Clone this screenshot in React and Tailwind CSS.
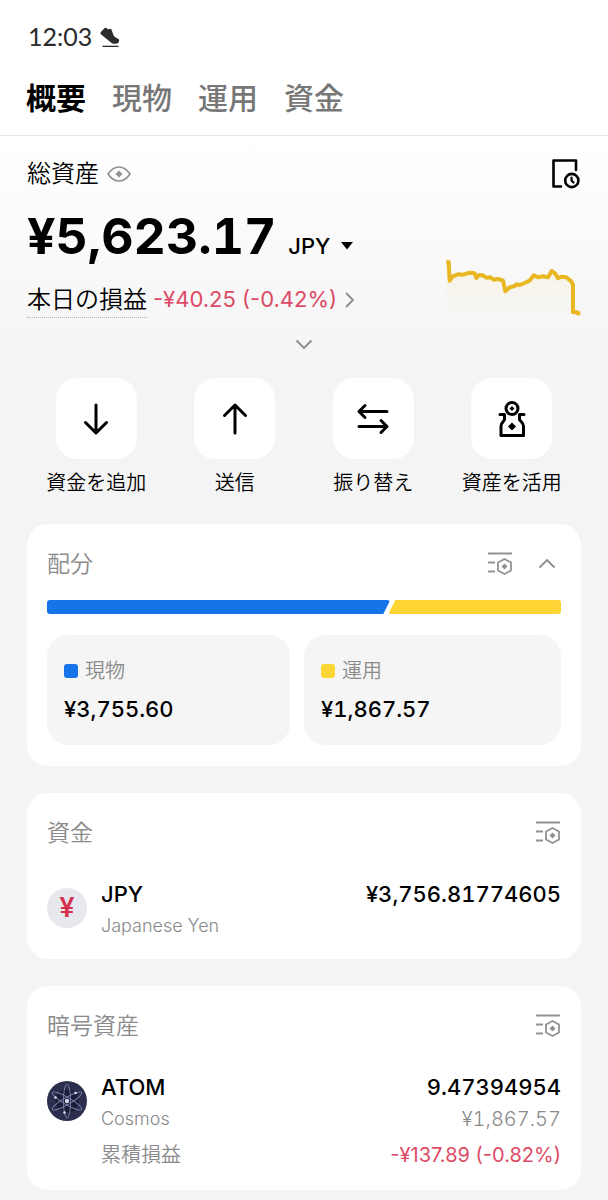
import React from "react";

const tabs = ["概要", "現物", "運用", "資金"];

const allocation = [
  { label: "現物", value: 3755.6, color: "bg-[#1773ea]" },
  { label: "運用", value: 1867.57, color: "bg-[#fcd535]" },
];

const total = allocation.reduce((sum, item) => sum + item.value, 0);

const formatYen = (value) =>
  "¥" + value.toLocaleString("en-US", { minimumFractionDigits: 2 });

const ShoeIcon = () => (
  <svg viewBox="0 0 60 64" className="w-5 h-[21px]" fill="#2b2b2b" aria-hidden="true">
    <path d="M1 17 13 4Q17 0 20 4Q23 9 28 6Q33 4 35 9L41 26Q44 32 53 35Q58 36 58 42Q57 50 49 51L42 51Q37 51 33 47L3 23Q0 20 1 17Z" />
    <rect x="7" y="57" width="49" height="4" />
  </svg>
);

const EyeIcon = () => (
  <svg viewBox="0 0 24 16" className="w-6 h-4" fill="none" stroke="#929292" strokeWidth="1.7" aria-hidden="true">
    <path d="M1 8C4 3.500 7.800 1 12 1s8 2.500 11 7c-3 4.500-6.800 7-11 7S4 12.500 1 8Z" strokeLinejoin="round" />
    <path d="M12 4.500 15.500 8 12 11.500 8.500 8Z" fill="#929292" stroke="none" />
  </svg>
);

const HistoryIcon = () => (
  <svg viewBox="0 0 28 30" className="w-7 h-[30px]" fill="none" stroke="#000" strokeWidth="2.6" strokeLinecap="round" strokeLinejoin="round" aria-hidden="true">
    <path d="M9 27.500H1.500V1.500H24V11" />
    <circle cx="19.800" cy="21.500" r="6.600" />
    <path d="M19.500 18.500V21.500L21.500 23.500" strokeWidth="2.2" />
  </svg>
);

const Sparkline = () => {
  const line =
    "50,364 57,364 60,420 68,408 85,401 100,402 120,396 135,398 140,412 148,403 160,404 170,411 182,410 192,417 205,415 220,420 227,452 240,440 255,436 260,431 270,433 285,427 300,420 312,404 325,410 340,407 355,410 366,391 376,398 385,413 395,408 410,410 425,422 430,432 430,515 440,514 443,518 452,518";
  return (
    <svg viewBox="46 352 408 192" className="w-[136px] h-16" fill="none" role="img" aria-label="資産推移">
      <defs>
        <linearGradient id="spark" x1="0" y1="0" x2="0" y2="1">
          <stop offset="0" stopColor="#eab71e" stopOpacity="0.08" />
          <stop offset="1" stopColor="#eab71e" stopOpacity="0.02" />
        </linearGradient>
      </defs>
      <polygon points={`50,520 ${line} 452,520`} fill="url(#spark)" />
      <polyline points={line} stroke="#e9b722" strokeWidth="12" strokeLinejoin="round" />
    </svg>
  );
};

const Chevron = ({ d, className }) => (
  <svg viewBox="0 0 18 18" className={className} fill="none" stroke="#8c8c8c" strokeWidth="1.8" aria-hidden="true">
    <path d={d} />
  </svg>
);

const FilterIcon = () => (
  <svg viewBox="0 0 24 24" className="w-6 h-6" fill="none" stroke="#929292" strokeWidth="1.8" aria-hidden="true">
    <path d="M0 1.500H24M0 10.500H7M0 19.500H7" />
    <path d="M16.500 7 23 10.500V18.500L16.500 22 10 18.500V10.500Z" strokeLinejoin="round" />
    <path d="M16.500 11.500 19.500 14.500 16.500 17.500 13.500 14.500Z" fill="#929292" stroke="none" />
  </svg>
);

const ActionIcon = ({ children }) => (
  <svg viewBox="0 0 36 40" className="w-9 h-10" fill="none" stroke="#000" strokeWidth="3" strokeLinecap="round" strokeLinejoin="round" aria-hidden="true">
    {children}
  </svg>
);

const actions = [
  { label: "資金を追加", icon: <path d="M18 6V34M7.500 23.500 18 34 28.500 23.500" /> },
  { label: "送信", icon: <path d="M18 34V6M7.500 16.500 18 6 28.500 16.500" /> },
  {
    label: "振り替え",
    icon: <path d="M32 12.500H4M10 6.500 4 12.500 10 18.500M4 27.500H32M26 21.500 32 27.500 26 33.500" />,
  },
  {
    label: "資産を活用",
    icon: (
      <>
        <circle cx="18" cy="9.500" r="6" />
        <path d="M18 7 20.500 9.500 18 12 15.500 9.500ZM18 23.500 22 27.500 18 31.500 14 27.500Z" fill="#000" stroke="none" />
        <path d="M6 15.500H10.500V20.500C10 22.500 7 24 7 27V36.500H29.500V27C29.500 24 26.500 22.500 25.500 20.500V15.500H30" />
      </>
    ),
  },
];

const CosmosIcon = () => (
  <svg viewBox="0 0 40 40" className="w-10 h-10" fill="none" role="img" aria-label="Cosmos">
    <circle cx="20" cy="20" r="20" fill="#2c2e4d" />
    <circle cx="20" cy="20" r="11.500" fill="#1b1c36" />
    <g stroke="#7e83ae" strokeWidth="0.9">
      <ellipse cx="20" cy="20" rx="3.600" ry="17" />
      <ellipse cx="20" cy="20" rx="3.600" ry="17" transform="rotate(60 20 20)" />
      <ellipse cx="20" cy="20" rx="3.600" ry="17" transform="rotate(120 20 20)" />
    </g>
    <g fill="#d5d9ec">
      <circle cx="20" cy="20" r="2.200" />
      <circle cx="8.500" cy="16.500" r="1.300" />
      <circle cx="28.500" cy="12" r="1.300" />
      <circle cx="17.500" cy="31.500" r="1.300" />
    </g>
  </svg>
);

const YenIcon = () => (
  <div className="w-10 h-10 rounded-full bg-[#e6e8ed] flex items-center justify-center font-['Roboto',sans-serif] text-[28px] leading-10 font-medium text-[#d6304f]">
    ¥
  </div>
);

const Card = ({ title, controls, children }) => (
  <section className="bg-white rounded-[21px] px-5 pt-5">
    <div className="h-10 flex items-center justify-between">
      <h2 className="text-[23px] font-[350] text-[#8a8a8a]">{title}</h2>
      <div className="pr-[1px] flex items-center gap-[26px]">
        <button type="button" aria-label="表示設定">
          <FilterIcon />
        </button>
        {controls}
      </div>
    </div>
    {children}
  </section>
);

const AssetRow = ({ icon, symbol, name, amount, value, pnl }) => (
  <div className="mt-[25px] pb-[17px] flex gap-[14px]">
    <div className="pt-[10px]">{icon}</div>
    <div className="flex-1 text-xl font-[350] text-[#8a8a8a]">
      <div className="h-8 flex items-center justify-between text-[22px] font-medium text-black">
        <span>{symbol}</span>
        <span>{amount}</span>
      </div>
      <div className="h-8 flex items-center justify-between">
        <span className="text-lg">{name}</span>
        <span>{value}</span>
      </div>
      {pnl && (
        <div className="mt-[2px] h-9 flex items-center justify-between">
          <span>累積損益</span>
          <span className="font-normal proportional-nums text-[#dd4a66]">{pnl}</span>
        </div>
      )}
    </div>
  </div>
);

const App = () => {
  return (
    <div lang="ja" className="min-h-screen bg-[#f4f4f4] pb-[10px] text-black tabular-nums font-['Inter','Noto_Sans_CJK_JP',sans-serif]">
      <header className="bg-white border-b border-[#e6e6e6] px-[26px]">
        <div className="h-[74px] pl-[2px] flex items-center gap-2 font-['Lato',sans-serif] text-[25px] text-[#2b2b2b]">
          <span>12:03</span>
          <ShoeIcon />
        </div>
        <nav className="flex gap-[26px] pb-[13px] text-3xl leading-[48px]">
          {tabs.map((tab, i) => (
            <a key={tab} href="#" className={i === 0 ? "font-bold text-black" : "font-medium text-[#777777]"}>
              {tab}
            </a>
          ))}
        </nav>
      </header>

      <main className="px-[27px]">
        <section className="-mx-[27px] px-[27px] pt-[18px] bg-linear-to-b from-white to-[#f4f4f4]">
          <div className="flex justify-between">
            <div>
              <div className="h-10 flex items-center gap-2 text-2xl">
                <h1 className="font-[350]">総資産</h1>
                <button type="button" aria-label="残高を表示">
                  <EyeIcon />
                </button>
              </div>
              <div className="h-[84px] flex items-center gap-3">
                <span className="text-[50px] leading-[60px] font-bold">¥5,623.17</span>
                <div className="pt-5 flex items-center gap-[10px]">
                  <select aria-label="通貨" defaultValue="JPY" className="appearance-none bg-transparent text-[22px] font-medium">
                    <option>JPY</option>
                  </select>
                  <svg viewBox="0 0 12 8" className="w-3 h-2" aria-hidden="true">
                    <path d="M0 0H12L6 7.500Z" />
                  </svg>
                </div>
              </div>
              <div className="h-11 flex items-center gap-[6px] text-2xl">
                <span className="leading-[34px] font-[350] border-b border-dotted border-[#b0b0b0]">本日の損益</span>
                <a href="#" className="flex items-center gap-1 text-[22px] proportional-nums text-[#dd4a66]">
                  -¥40.25 (-0.42%)
                  <Chevron d="M5 2 12 9 5 16" className="w-[18px] h-[18px]" />
                </a>
              </div>
            </div>
            <div className="flex flex-col items-end justify-between">
              <button type="button" aria-label="履歴" className="h-10 pr-[1px]">
                <HistoryIcon />
              </button>
              <Sparkline />
            </div>
          </div>
          <div className="h-11 flex justify-center">
            <button type="button" aria-label="詳細">
              <Chevron d="M1.500 5.500 9 13 16.500 5.500" className="w-[18px] h-[18px]" />
            </button>
          </div>
        </section>

        <div className="pt-3 grid grid-cols-4">
          {actions.map((action) => (
            <button key={action.label} type="button" className="flex flex-col items-center gap-2 text-xl leading-8 font-[350]">
              <span className="w-[81px] h-[81px] rounded-[21px] bg-white flex items-center justify-center">
                <ActionIcon>{action.icon}</ActionIcon>
              </span>
              {action.label}
            </button>
          ))}
        </div>

        <div className="mt-[25px] flex flex-col gap-[27px]">
          <Card
            title="配分"
            controls={
              <button type="button" aria-label="折りたたむ" className="pr-1">
                <Chevron d="M1.500 12.500 9 5 16.500 12.500" className="w-[18px] h-[18px]" />
              </button>
            }
          >
            <div className="mt-4 h-[14px] flex">
              <div
                className="bg-[#1773ea] rounded-[3px] [clip-path:polygon(0_0,100%_0,calc(100%-7px)_100%,0_100%)]"
                style={{ width: `${(allocation[0].value / total) * 100}%` }}
              />
              <div className="-ml-[2px] flex-1 bg-[#fcd535] rounded-[3px] [clip-path:polygon(7px_0,100%_0,100%_100%,0_100%)]" />
            </div>
            <div className="mt-[21px] pb-[21px] grid grid-cols-[243fr_257fr] gap-[14px]">
              {allocation.map((item) => (
                <div key={item.label} className="bg-[#f5f5f5] rounded-[21px] px-[17px] pt-5 pb-[14px]">
                  <div className="h-8 flex items-center gap-[7px] text-xl font-[350] text-[#8a8a8a]">
                    <span className={`w-[14px] h-[14px] rounded-[3px] ${item.color}`} />
                    {item.label}
                  </div>
                  <div className="h-11 flex items-center text-[22px] font-medium">{formatYen(item.value)}</div>
                </div>
              ))}
            </div>
          </Card>

          <Card title="資金">
            <AssetRow icon={<YenIcon />} symbol="JPY" name="Japanese Yen" amount="¥3,756.81774605" />
          </Card>

          <Card title="暗号資産">
            <AssetRow
              icon={<CosmosIcon />}
              symbol="ATOM"
              name="Cosmos"
              amount="9.47394954"
              value="¥1,867.57"
              pnl="-¥137.89 (-0.82%)"
            />
          </Card>
        </div>
      </main>
    </div>
  );
};

export default App;
